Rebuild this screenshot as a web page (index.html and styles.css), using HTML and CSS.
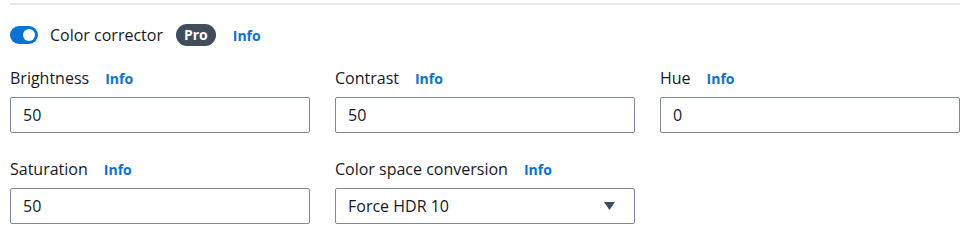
FILE: index.html
```html
<!DOCTYPE html>
<html>
<head>
<meta charset="utf-8">
<link rel="stylesheet" href="styles.css">
</head>
<body>
<div class="panel">
  <div class="divider"></div>
  <div class="toggle-row">
    <span class="toggle"><span class="knob"></span></span>
    <span class="toggle-label">Color corrector</span>
    <span class="badge">Pro</span>
    <a class="info">Info</a>
  </div>
  <div class="grid">
    <div class="field">
      <div class="label"><span>Brightness</span><a class="info">Info</a></div>
      <div class="input">50</div>
    </div>
    <div class="field">
      <div class="label"><span>Contrast</span><a class="info">Info</a></div>
      <div class="input">50</div>
    </div>
    <div class="field">
      <div class="label"><span>Hue</span><a class="info">Info</a></div>
      <div class="input">0</div>
    </div>
    <div class="field">
      <div class="label"><span>Saturation</span><a class="info">Info</a></div>
      <div class="input">50</div>
    </div>
    <div class="field">
      <div class="label"><span>Color space conversion</span><a class="info">Info</a></div>
      <div class="input select"><span>Force HDR 10</span>
        <svg class="caret" width="11" height="8" viewBox="0 0 11 8"><path d="M0 0 L11 0 L5.5 8 Z" fill="#414d5c"/></svg>
      </div>
    </div>
  </div>
</div>
</body>
</html>
```
FILE: styles.css
```css
* { box-sizing: border-box; }
body {
  margin: 0;
  background: #fff;
  font-family: "Open Sans", "Noto Sans", Arial, sans-serif;
  color: #16191f;
}
.panel {
  padding: 3px 17px 0 10px;
}
.divider {
  height: 2px;
  background: #e9ebed;
}
.toggle-row {
  display: flex;
  align-items: center;
  height: 22px;
  margin-top: 19px;
}
.toggle {
  width: 28px;
  height: 18px;
  border-radius: 9px;
  background: #0972d3;
  position: relative;
  display: inline-block;
}
.knob {
  position: absolute;
  top: 3px;
  right: 3px;
  width: 12px;
  height: 12px;
  border-radius: 50%;
  background: #fff;
}
.toggle-label {
  margin-left: 12px;
  font-size: 16px;
}
.badge {
  margin-left: 13px;
  background: #414d5c;
  color: #fff;
  font-size: 14px;
  font-weight: 700;
  height: 22px;
  line-height: 22px;
  padding: 0 8px;
  border-radius: 11px;
}
.info {
  color: #0972d3;
  font-weight: 700;
  font-size: 14px;
  margin-left: 17px;
}
.grid {
  display: grid;
  grid-template-columns: 300px 300px 300px;
  column-gap: 25px;
  row-gap: 25px;
  margin-top: 21px;
}
.label {
  display: flex;
  align-items: center;
  height: 22px;
  font-size: 16px;
}
.label .info { margin-left: 16px; }
.input {
  margin-top: 8px;
  height: 36px;
  border: 1px solid #7d8998;
  border-radius: 2px;
  padding: 0 12px;
  display: flex;
  align-items: center;
  font-size: 16px;
}
.select {
  justify-content: space-between;
  padding-right: 19px;
}
```
